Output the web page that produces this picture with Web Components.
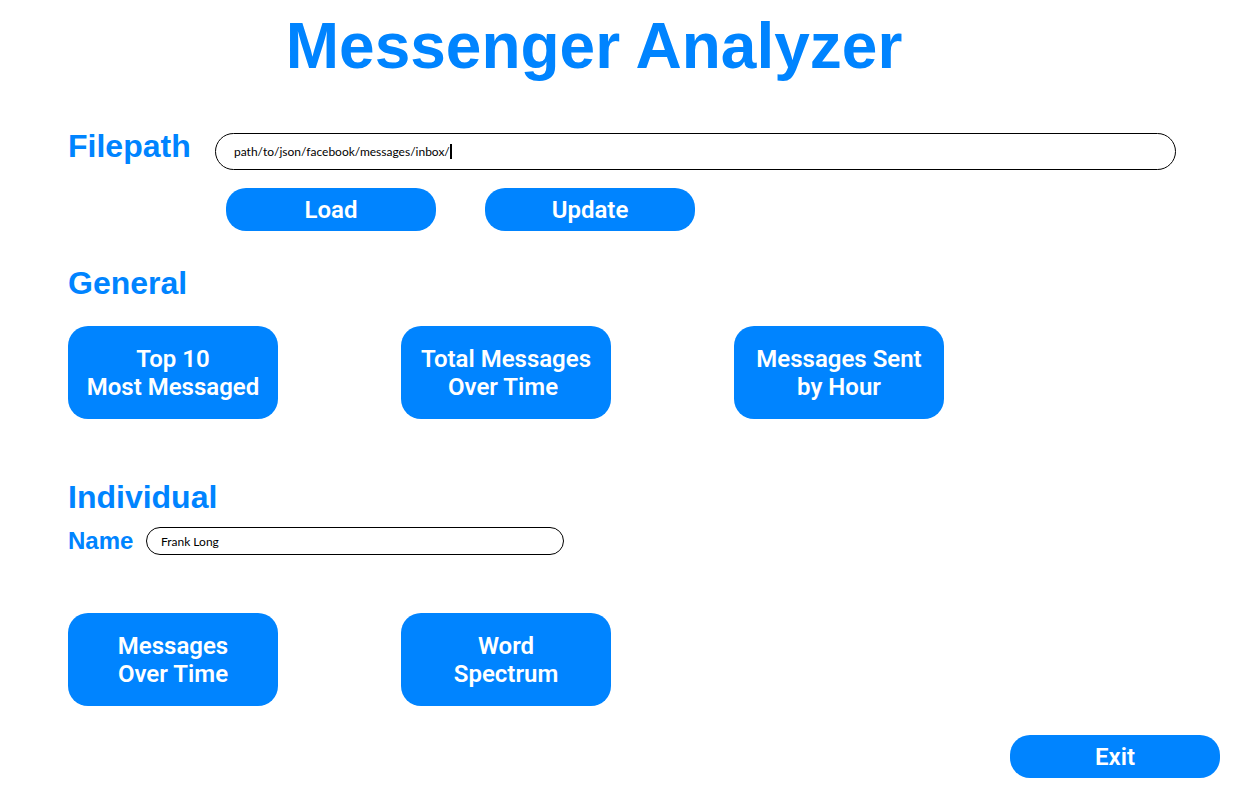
<!DOCTYPE html>
<html lang="en">
<head>
<meta charset="utf-8">
<title>Messenger Analyzer</title>
<style>
  body {
    margin: 0;
    background: #fff;
    --accent: #0084ff;
    font-family: "Liberation Sans", Arial, sans-serif;
  }
</style>
</head>
<body>
<messenger-analyzer></messenger-analyzer>
<script>
  function define(name, html, setup) {
    const template = document.createElement('template');
    template.innerHTML = html;
    customElements.define(name, class extends HTMLElement {
      constructor() {
        super();
        this.attachShadow({ mode: 'open' }).append(template.content.cloneNode(true));
      }
      connectedCallback() {
        if (setup) setup(this, this.shadowRoot);
      }
    });
  }

  define('pill-button', `
    <style>
      :host { display: block; width: 210px; }
      button {
        display: block; width: 100%; height: 43px; padding: 0;
        border: 0; border-radius: 20px;
        background: var(--accent); color: #fff;
        font: 600 24px/28px Roboto, sans-serif;
        text-align: center; cursor: pointer;
      }
      :host([tall]) button { height: 93px; }
    </style>
    <button type="button"><slot></slot></button>`);

  define('section-block', `
    <style>
      :host { display: block; }
      h2 { margin: 0; font: bold 32px/36px "Liberation Sans", Arial, sans-serif; color: var(--accent); }
    </style>
    <section><h2><slot name="heading"></slot></h2><slot></slot></section>`);

  define('button-grid', `
    <style>
      :host { display: grid; grid-template-columns: repeat(auto-fill, 210px); gap: 24px 123px; }
    </style>
    <slot></slot>`);

  define('text-field', `
    <style>
      :host { display: grid; grid-template-columns: 147px 1fr; align-items: center; }
      label { font-weight: bold; font-size: 32px; line-height: 36px; padding-bottom: 11px; color: var(--accent); }
      .box { position: relative; display: flex; }
      input {
        box-sizing: border-box; width: 100%; height: 37px; margin: 0; padding: 0 18px;
        border: 1px solid #000; border-radius: 19px; background: #fff; color: #000; outline: none;
        font: 12px/16px Lato, "Segoe UI", sans-serif;
      }
      /* The caret follows an invisible copy of the value. */
      .caret {
        display: none; position: absolute; left: 19px; top: 11px; height: 15px;
        border-right: 2px solid #000; color: transparent; pointer-events: none;
        font: 12px/16px Lato, "Segoe UI", sans-serif; white-space: pre;
      }
      .caret::before { content: attr(data-value); }
      :host([active]) .caret { display: block; }
      :host([compact]) { grid-template-columns: 78px minmax(0, 418px); }
      :host([compact]) label { font-size: 24px; line-height: 28px; padding: 0; }
      :host([compact]) input { height: 28px; padding: 0 14px; }
    </style>
    <label for="field"></label>
    <div class="box"><input id="field" type="text" autocomplete="off" spellcheck="false"><span class="caret" aria-hidden="true"></span></div>`,
    (host, root) => {
      const input = root.querySelector('input');
      const caret = root.querySelector('.caret');
      root.querySelector('label').textContent = host.getAttribute('label');
      input.value = host.getAttribute('value');
      caret.dataset.value = input.value;
      input.addEventListener('input', () => { caret.dataset.value = input.value; });
    });

  define('messenger-analyzer', `
    <style>
      :host { display: block; }
      main { padding: 10px 57px 0 68px; }
      h1 { margin: 0 56px 46px 0; font-size: 64px; line-height: 72px; text-align: center; color: var(--accent); }
      .actions { display: flex; gap: 49px; margin: 13px 0 34px 158px; }
      .general { margin-bottom: 60px; }
      .general button-grid { margin-top: 25px; }
      .individual text-field { margin: 12px 0 58px; }
      footer { display: flex; justify-content: flex-end; padding: 29px 13px 7px; }
    </style>
    <main>
      <h1>Messenger Analyzer</h1>
      <text-field label="Filepath" value="path/to/json/facebook/messages/inbox/" active></text-field>
      <div class="actions">
        <pill-button>Load</pill-button>
        <pill-button>Update</pill-button>
      </div>
      <section-block class="general">
        <span slot="heading">General</span>
        <button-grid>
          <pill-button tall>Top 10<br>Most Messaged</pill-button>
          <pill-button tall>Total Messages<br>Over Time&nbsp;</pill-button>
          <pill-button tall>Messages Sent<br>by Hour</pill-button>
        </button-grid>
      </section-block>
      <section-block class="individual">
        <span slot="heading">Individual</span>
        <text-field label="Name" value="Frank Long" compact></text-field>
        <button-grid>
          <pill-button tall>Messages<br>Over Time</pill-button>
          <pill-button tall>Word<br>Spectrum</pill-button>
        </button-grid>
      </section-block>
    </main>
    <footer><pill-button>Exit</pill-button></footer>`);
</script>
</body>
</html>
